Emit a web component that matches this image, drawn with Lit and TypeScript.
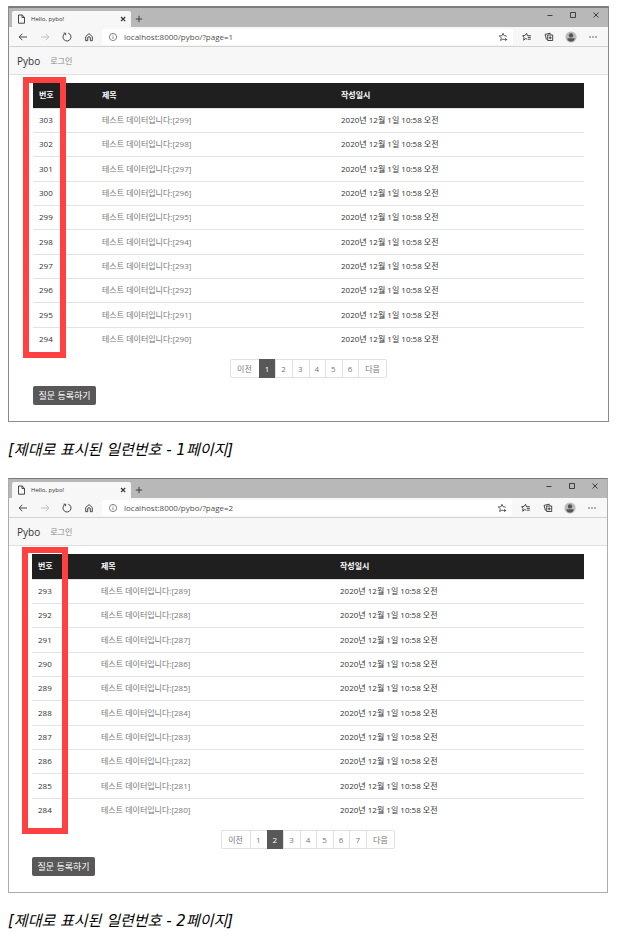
import { LitElement, html, css, svg, nothing } from "lit";
import { customElement, property } from "lit/decorators.js";

const line = (body: unknown, cls = "") => html`<svg class="icon ${cls}" viewBox="0 0 12 12" aria-hidden="true">${body}</svg>`;

const icons = {
  file: line(svg`<path d="M3.5 2h3.7l2.3 2.3v5.9h-6z"/><path d="M7 2.2v2.3h2.3"/>`),
  closeTab: line(svg`<path d="M4 4l4.2 4.2M8.2 4l-4.2 4.2" stroke-width="1.2"/>`),
  plus: line(svg`<path d="M6 2.8v6.4M2.8 6h6.4"/>`),
  minimize: line(svg`<path d="M3.5 6.5h5"/>`),
  maximize: line(svg`<path d="M3.5 3.5h5v5h-5z"/>`),
  close: line(svg`<path d="M3.5 3.5l5 5M8.5 3.5l-5 5"/>`),
  back: line(svg`<path d="M10 6H2.3M5.3 2.8L2.2 6l3.1 3.2"/>`),
  forward: line(svg`<path d="M2 6h7.7M6.7 2.8L9.8 6 6.7 9.2"/>`, "faint"),
  reload: line(svg`<path d="M7.3 2.2A4 4 0 1 1 3.7 2.7"/><path d="M2.6 2.2h2v2"/>`),
  home: line(svg`<path d="M2.7 5.6L6 2.6l3.3 3v4.1H7.3V7a1.3 1.3 0 0 0-2.6 0v2.7H2.7z"/>`),
  info: line(svg`<circle cx="6" cy="6" r="3.6"/><path d="M6 5.5v2.4M6 3.8v.8"/>`, "info"),
  starAdd: line(svg`<path d="M9.8 5.1L7 4.7 6 2.2 5 4.7 2.2 4.9l2.1 1.8-.7 2.8L6 8l1 .6"/><path d="M8.7 7v3M7.2 8.5h3"/>`, "soft"),
  favorites: line(svg`<path d="M6.2 8.2L4.6 7.6 2.7 9.2l.3-2.8L1.7 4.7l2.4-.4L5.6 2.3l.8 2.4h3.4"/><path d="M6.8 6.4h3M6.8 8.2h3"/>`),
  collections: line(svg`<path d="M4.7 4h5v5.5h-5z"/><path d="M7.2 5.3v3M5.7 6.8h3"/><path d="M4.3 8.6l-1-.5-1.2-4.7 5-1.2.5 1.4"/>`),
  avatar: html`<svg class="icon" viewBox="0 0 12 12" aria-hidden="true"><circle class="disc" cx="6" cy="6" r="5.6"/><circle class="person" cx="6" cy="4.4" r="2.2"/><path class="person" d="M2.2 8.1q0-.8.8-.8h6q.8 0 .8.8-1 2.6-3.8 2.6T2.2 8.1z"/></svg>`,
  more: html`<svg class="icon" viewBox="0 0 12 12" aria-hidden="true"><g class="dots"><circle cx="3" cy="6" r=".7"/><circle cx="6" cy="6" r=".7"/><circle cx="9" cy="6" r=".7"/></g></svg>`,
};

@customElement("browser-window")
class BrowserWindow extends LitElement {
  @property({ type: Number }) page = 1;
  @property({ type: Number }) first = 0;
  @property({ type: Number }) pages = 6;

  static styles = css`
    :host {
      display: block;
      border: 1px solid #8a8a8a;
      border-top: 2px solid #7c7c7c;
      background: #fff;
      color: #333;
      font: 8px/12px "Open Sans", "Noto Sans CJK KR", sans-serif;
    }
    :host([page="2"]) {
      border-color: #acacac;
      border-top: 1px solid #777;
      margin-right: 1px;
    }
    * { box-sizing: border-box; }
    button, input { font: inherit; color: inherit; margin: 0; padding: 0; border: 0; background: none; }
    a { color: inherit; text-decoration: none; }
    .icon { display: block; width: 12px; height: 12px; fill: none; stroke: #333; stroke-width: 0.9; }
    .faint { stroke: #bbb; }
    .info { stroke: #777; }
    .soft { stroke: #555; }
    .disc { fill: #bdbdbd; stroke: none; }
    .person { fill: #555; stroke: none; }
    .dots { fill: #333; stroke: none; }
    .tabs { display: flex; height: 19px; background: #b8b8b8; padding-left: 3px; }
    .tab { display: flex; align-items: center; align-self: flex-end; width: 119px; height: 16px; padding: 0 2px 0 3px; gap: 4px; background: #f7f7f7; border-radius: 2px 2px 0 0; }
    .title { flex: 1; font-size: 6px; }
    .new { align-self: center; margin: 2px auto 0 2px; }
    .controls { display: flex; gap: 11px; padding: 0 6px 0 0; height: 13px; align-items: center; }
    .toolbar { display: flex; align-items: center; height: 20px; padding: 0 9px 0 8px; gap: 10px; background: #f7f7f7; border-bottom: 1px solid #d2d2d2; }
    .address { display: flex; flex: 1; align-items: center; height: 16px; padding: 0 4px 0 5px; gap: 5px; border-radius: 2px; background: #fff; margin: 0 -2px 0 -3px; }
    .address input { flex: 1; min-width: 0; height: 14px; color: #505050; }
    .nav { display: flex; align-items: center; height: 28px; padding-left: 8px; gap: 10px; background: #f7f7f7; border-bottom: 1px solid #e0e0e0; color: #888; }
    .brand { font-size: 10px; color: #333; }
    main { padding: 8px 24px 16px; }
    :host([page="2"]) main { padding-left: 23px; padding-right: 23px; }
    .list { position: relative; }
    table { width: 100%; table-layout: fixed; border-collapse: separate; border-spacing: 0; }
    .no { width: 63px; }
    .subject { width: 239px; }
    th { height: 25px; padding: 0 6px 1px; background: #1f1f1f; color: #fff; text-align: left; font-weight: 700; }
    td { height: 24px; padding: 0 6px 1px; border-top: 1px solid #e3e3e3; }
    tr:nth-child(3n) td { height: 25px; }
    td a { color: #777; }
    .mark { position: absolute; top: -6px; bottom: -7px; left: -10px; width: 43px; border: 6px solid #ff4141; pointer-events: none; }
    :host([page="2"]) .mark { top: -7px; bottom: -12px; width: 46px; }
    .pages { display: flex; justify-content: center; margin: 8px 0; }
    .pages a { height: 19px; padding: 0 6px 0 5px; line-height: 17px; border: 1px solid #e0e0e0; border-right: 0; color: #777; }
    .pages a:first-child { padding: 0 7px 0 6px; border-radius: 2px 0 0 2px; }
    .pages a:last-child { padding: 0 6px; border-right: 1px solid #e0e0e0; border-radius: 0 2px 2px 0; }
    .pages .current { background: #585858; border-color: #585858; color: #fff; }
    .ask { display: block; width: 63px; height: 19px; border-radius: 2px; background: #585858; color: #fff; font-size: 9px; line-height: 17px; white-space: nowrap; }
  `;

  render() {
    const numbers = Array.from({ length: this.pages }, (_, i) => i + 1);
    const rows = Array.from({ length: 10 }, (_, i) => this.first - i);
    return html`
      <div class="tabs">
        <div class="tab">${icons.file}<span class="title">Hello, pybo!</span><button aria-label="탭 닫기">${icons.closeTab}</button></div>
        <button class="new" aria-label="새 탭">${icons.plus}</button>
        <div class="controls">
          <button aria-label="최소화">${icons.minimize}</button>
          <button aria-label="최대화">${icons.maximize}</button>
          <button aria-label="닫기">${icons.close}</button>
        </div>
      </div>
      <div class="toolbar">
        <button aria-label="뒤로">${icons.back}</button>
        <button aria-label="앞으로">${icons.forward}</button>
        <button aria-label="새로 고침">${icons.reload}</button>
        <button aria-label="홈">${icons.home}</button>
        <div class="address">
          ${icons.info}
          <input type="text" aria-label="주소" .value=${`localhost:8000/pybo/?page=${this.page}`} />
          <button aria-label="즐겨찾기 추가">${icons.starAdd}</button>
        </div>
        <button aria-label="즐겨찾기">${icons.favorites}</button>
        <button aria-label="컬렉션">${icons.collections}</button>
        <button aria-label="프로필">${icons.avatar}</button>
        <button aria-label="설정">${icons.more}</button>
      </div>
      <nav class="nav"><a class="brand" href="#">Pybo</a><a href="#">로그인</a></nav>
      <main>
        <div class="list">
          <table>
            <thead><tr><th class="no">번호</th><th class="subject">제목</th><th>작성일시</th></tr></thead>
            <tbody>
              ${rows.map((n) => html`<tr><td>${n}</td><td><a href="#">테스트 데이터입니다:[${n - 4}]</a></td><td>2020년 12월 1일 10:58 오전</td></tr>`)}
            </tbody>
          </table>
          <div class="mark"></div>
        </div>
        <nav class="pages" aria-label="페이지">
          <a href="#">이전</a>${numbers.map((n) => html`<a href="#" class=${n === this.page ? "current" : nothing}>${n}</a>`)}<a href="#">다음</a>
        </nav>
        <button class="ask">질문 등록하기</button>
      </main>
    `;
  }
}

@customElement("app-root")
class AppRoot extends LitElement {
  static styles = css`
    :host { display: block; padding: 6px 13px 0 8px; background: #fff; }
    .caption { margin: 18px 0; color: #000; font: italic 15px/20px "DejaVu Sans", "Noto Sans CJK KR", sans-serif; }
    .caption:last-child { margin-bottom: 0; }
  `;

  render() {
    return html`
      <browser-window page="1" first="303" pages="6"></browser-window>
      <p class="caption">[제대로 표시된 일련번호 - 1페이지]</p>
      <browser-window page="2" first="293" pages="7"></browser-window>
      <p class="caption">[제대로 표시된 일련번호 - 2페이지]</p>
    `;
  }
}
